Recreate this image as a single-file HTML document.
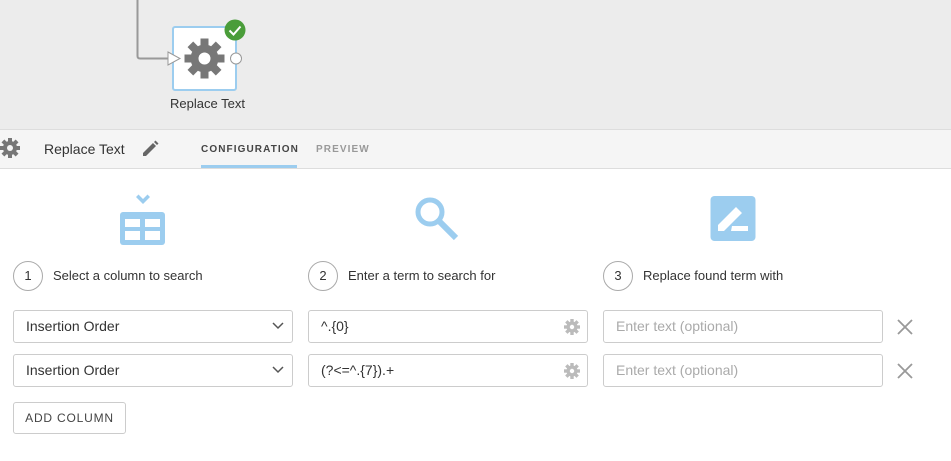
<!DOCTYPE html>
<html><head><style>
*{margin:0;padding:0;box-sizing:border-box}
body{width:951px;height:461px;position:relative;overflow:hidden;background:#fff;font-family:"Liberation Sans",sans-serif;color:#333}
.a{position:absolute}
.inp{position:absolute;height:33px;border:1px solid #ccc;border-radius:3px;background:#fff;font-size:14px;padding-left:12px;line-height:31px;color:#333}
.ph{color:#aaa}
.num{position:absolute;width:30px;height:30px;border:1px solid #aaa;border-radius:50%;text-align:center;line-height:28px;font-size:13px;color:#333}
.lbl{position:absolute;font-size:13px;color:#333}
</style></head><body>
<div class="a" style="left:0;top:0;width:951px;height:129px;background:#ececec"></div>
<svg class="a" style="left:0;top:0" width="300" height="129">
<path d="M137.5 0 V56 Q137.5 58.5 140 58.5 H170" stroke="#999" stroke-width="2" fill="none"/>
<rect x="173" y="27" width="63" height="63" rx="2" fill="#fff" stroke="#9ccdef" stroke-width="2"/>
<path d="M168 52 L180 58.5 L168 65 Z" fill="#fff" stroke="#999" stroke-width="1"/>
<circle cx="236" cy="58.5" r="5.5" fill="#fff" stroke="#999"/>
<g transform="translate(204.5 58.5)" fill="#777">
<circle r="14"/>
<g id="t"><rect x="-4" y="-20" width="8" height="10"/></g>
<use href="#t" transform="rotate(45)"/><use href="#t" transform="rotate(90)"/><use href="#t" transform="rotate(135)"/><use href="#t" transform="rotate(180)"/><use href="#t" transform="rotate(225)"/><use href="#t" transform="rotate(270)"/><use href="#t" transform="rotate(315)"/>
<circle r="6" fill="#fff"/>
</g>
<circle cx="235" cy="30" r="10.5" fill="#4a9d3a"/>
<path d="M229.5 30.5 L233.5 34.5 L240.5 26.5" stroke="#fff" stroke-width="2" fill="none"/>
</svg>
<div class="a" style="left:150px;top:96px;width:115px;text-align:center;font-size:13px;color:#333">Replace Text</div>

<div class="a" style="left:0;top:129px;width:951px;height:40px;background:#f5f5f5;border-top:1px solid #ddd;border-bottom:1px solid #ddd"></div>
<svg class="a" style="left:0;top:137px" width="24" height="24"><g transform="translate(10 11)" fill="#777"><circle r="7"/><g id="u"><rect x="-2" y="-10" width="4" height="5"/></g><use href="#u" transform="rotate(45)"/><use href="#u" transform="rotate(90)"/><use href="#u" transform="rotate(135)"/><use href="#u" transform="rotate(180)"/><use href="#u" transform="rotate(225)"/><use href="#u" transform="rotate(270)"/><use href="#u" transform="rotate(315)"/><circle r="3" fill="#f5f5f5"/></g></svg>
<div class="a" style="left:44px;top:141px;font-size:14px;color:#333">Replace Text</div>
<svg class="a" style="left:141px;top:140px" width="18" height="18"><path d="M2 16 L2 13 L12 3 L15 6 L5 16 Z M13 2 L14.5 0.5 L17.5 3.5 L16 5 Z" fill="#666"/></svg>
<div class="a" style="left:201px;top:144px;font-size:10px;letter-spacing:1.1px;font-weight:bold;color:#444">CONFIGURATION</div>
<div class="a" style="left:201px;top:165px;width:96px;height:3px;background:#9ccdef"></div>
<div class="a" style="left:316px;top:144px;font-size:10px;letter-spacing:1.1px;font-weight:bold;color:#999">PREVIEW</div>

<svg class="a" style="left:118px;top:192px" width="50" height="55" fill="#9ccdef">
<path d="M25 12 L18 5 L20.5 2.5 L25 7 L29.5 2.5 L32 5 Z"/>
<rect x="2" y="20" width="45" height="33" rx="3"/>
<g fill="#fff"><rect x="7" y="27" width="15" height="8"/><rect x="27" y="27" width="15" height="8"/><rect x="7" y="39" width="15" height="9"/><rect x="27" y="39" width="15" height="9"/></g>
</svg>
<svg class="a" style="left:412px;top:194px" width="50" height="50"><circle cx="18" cy="18" r="12" stroke="#9ccdef" stroke-width="5" fill="none"/><path d="M27 27 L44 44" stroke="#9ccdef" stroke-width="6"/></svg>
<svg class="a" style="left:710px;top:196px" width="46" height="46"><rect x="0.5" y="0" width="45" height="45" rx="4" fill="#9ccdef"/><path d="M8 35 L8 29 L26 11 L32 17 L14 35 Z M21 35 L22 30 L38 30 L38 35 Z" fill="#fff"/></svg>

<div class="num" style="left:13px;top:261px">1</div><div class="lbl" style="left:53px;top:268px">Select a column to search</div>
<div class="num" style="left:308px;top:261px">2</div><div class="lbl" style="left:348px;top:268px">Enter a term to search for</div>
<div class="num" style="left:603px;top:261px">3</div><div class="lbl" style="left:643px;top:268px">Replace found term with</div>

<div class="inp" style="left:13px;top:310px;width:280px">Insertion Order</div>
<div class="inp" style="left:13px;top:354px;width:280px">Insertion Order</div>
<svg class="a" style="left:272px;top:322px" width="12" height="8"><path d="M1 1 L6 6 L11 1" stroke="#555" stroke-width="1.5" fill="none"/></svg>
<svg class="a" style="left:272px;top:366px" width="12" height="8"><path d="M1 1 L6 6 L11 1" stroke="#555" stroke-width="1.5" fill="none"/></svg>
<div class="inp" style="left:308px;top:310px;width:280px">^.{0}</div>
<div class="inp" style="left:308px;top:354px;width:280px">(?&lt;=^.{7}).+</div>
<svg class="a" style="left:563px;top:318px" width="18" height="18"><g transform="translate(9 9)" fill="#bbb"><circle r="5.5"/><g id="v"><rect x="-1.7" y="-8" width="3.4" height="4"/></g><use href="#v" transform="rotate(45)"/><use href="#v" transform="rotate(90)"/><use href="#v" transform="rotate(135)"/><use href="#v" transform="rotate(180)"/><use href="#v" transform="rotate(225)"/><use href="#v" transform="rotate(270)"/><use href="#v" transform="rotate(315)"/><circle r="2.2" fill="#fff"/></g></svg>
<svg class="a" style="left:563px;top:362px" width="18" height="18"><g transform="translate(9 9)" fill="#bbb"><circle r="5.5"/><use href="#v"/><use href="#v" transform="rotate(45)"/><use href="#v" transform="rotate(90)"/><use href="#v" transform="rotate(135)"/><use href="#v" transform="rotate(180)"/><use href="#v" transform="rotate(225)"/><use href="#v" transform="rotate(270)"/><use href="#v" transform="rotate(315)"/><circle r="2.2" fill="#fff"/></g></svg>
<div class="inp ph" style="left:603px;top:310px;width:280px">Enter text (optional)</div>
<div class="inp ph" style="left:603px;top:354px;width:280px">Enter text (optional)</div>
<svg class="a" style="left:897px;top:319px" width="16" height="16"><path d="M1 1 L15 15 M15 1 L1 15" stroke="#999" stroke-width="1.8"/></svg>
<svg class="a" style="left:897px;top:363px" width="16" height="16"><path d="M1 1 L15 15 M15 1 L1 15" stroke="#999" stroke-width="1.8"/></svg>

<div class="a" style="left:13px;top:402px;width:113px;height:32px;border:1px solid #ccc;border-radius:3px;text-align:center;line-height:30px;font-size:12px;letter-spacing:0.8px;color:#444">ADD COLUMN</div>
</body></html>
